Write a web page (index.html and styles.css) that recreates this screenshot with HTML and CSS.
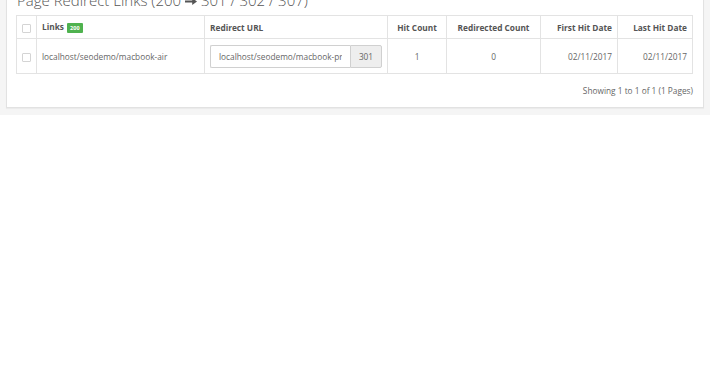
FILE: index.html
```html
<!DOCTYPE html>
<html>
<head>
<meta charset="utf-8">
<link rel="stylesheet" href="styles.css">
</head>
<body>
<div class="page">
  <div class="panel">
    <h3 class="title">Page Redirect Links (200 <svg class="arrow" width="12" height="7" viewBox="0 0 12 7"><path d="M0 2.6h7.2V0L12 3.5 7.2 7V4.4H0z" fill="#555"/></svg> 301 / 302 / 307)</h3>
    <table class="grid">
      <colgroup>
        <col class="c-check"><col class="c-link"><col class="c-url"><col class="c-hit"><col class="c-red"><col class="c-first"><col class="c-last">
      </colgroup>
      <thead>
        <tr>
          <th class="center"><span class="check"></span></th>
          <th class="left">Links <span class="badge">200</span></th>
          <th class="left">Redirect URL</th>
          <th class="center">Hit Count</th>
          <th class="center">Redirected Count</th>
          <th class="right">First Hit Date</th>
          <th class="right">Last Hit Date</th>
        </tr>
      </thead>
      <tbody>
        <tr>
          <td class="center"><span class="check"></span></td>
          <td class="left">localhost/seodemo/macbook-air</td>
          <td class="left">
            <div class="group"><input class="field" type="text" value="localhost/seodemo/macbook-pro" readonly><span class="addon">301</span></div>
          </td>
          <td class="center">1</td>
          <td class="center">0</td>
          <td class="right">02/11/2017</td>
          <td class="right">02/11/2017</td>
        </tr>
      </tbody>
    </table>
    <div class="foot">Showing 1 to 1 of 1 (1 Pages)</div>
  </div>
</div>
</body>
</html>
```
FILE: styles.css
```css
html, body {
  margin: 0;
  padding: 0;
  background: #fff;
  font-family: "Open Sans", "Liberation Sans", sans-serif;
}
.page {
  background: #f5f5f5;
  padding: 0 6px 7px 6px;
  margin-top: -9px;
}
.panel {
  background: #fff;
  border: 1px solid #e2e2e2;
  border-top: none;
  box-shadow: 0 1px 1px rgba(0,0,0,0.04);
  padding: 0 10px 0 9px;
}
.title {
  margin: 0 0 6px 1px;
  font-weight: 300;
  font-size: 15px;
  line-height: 18px;
  color: #555;
  white-space: nowrap;
}
.arrow {
  vertical-align: 1px;
}
.grid {
  width: 676px;
  border-collapse: collapse;
  table-layout: fixed;
  font-size: 8.3px;
}
.c-check { width: 20px; }
.c-link { width: 168px; }
.c-url { width: 183px; }
.c-hit { width: 59px; }
.c-red { width: 94px; }
.c-first { width: 77px; }
.c-last { width: 75px; }
.grid th, .grid td {
  border: 1px solid #e3e3e3;
  padding: 0 5px;
  white-space: nowrap;
  overflow: hidden;
}
.grid th {
  height: 22px;
  font-weight: 700;
  color: #555;
}
.grid td {
  height: 34px;
  color: #666;
}
.grid .center { text-align: center; padding: 0; }
.grid .left { text-align: left; }
.grid .right { text-align: right; }
.check {
  display: inline-block;
  width: 7px;
  height: 7px;
  border: 1px solid #d4d4d4;
  border-radius: 1px;
  background: #fff;
  vertical-align: middle;
}
.badge {
  display: inline-block;
  background: #4fb24f;
  color: #fff;
  font-size: 5.5px;
  font-weight: 700;
  line-height: 10px;
  padding: 0 3px;
  border-radius: 1px;
  vertical-align: middle;
  margin-left: 1px;
}
.group {
  display: flex;
  width: 172px;
  height: 23px;
}
.field {
  flex: 0 0 140px;
  width: 140px;
  height: 23px;
  box-sizing: border-box;
  margin: 0;
  border: 1px solid #d0d0d0;
  border-right: none;
  border-radius: 2px 0 0 2px;
  padding: 0 8px 0 8px;
  font-family: "Open Sans", "Liberation Sans", sans-serif;
  font-size: 8.3px;
  color: #666;
  background: #fff;
  outline: none;
}
.addon {
  flex: 0 0 32px;
  box-sizing: border-box;
  background: #eee;
  border: 1px solid #d0d0d0;
  border-radius: 0 2px 2px 0;
  text-align: center;
  line-height: 21px;
  color: #666;
}
.foot {
  text-align: right;
  font-size: 8.3px;
  color: #666;
  padding: 12px 0 11px;
  line-height: 10px;
}
```
